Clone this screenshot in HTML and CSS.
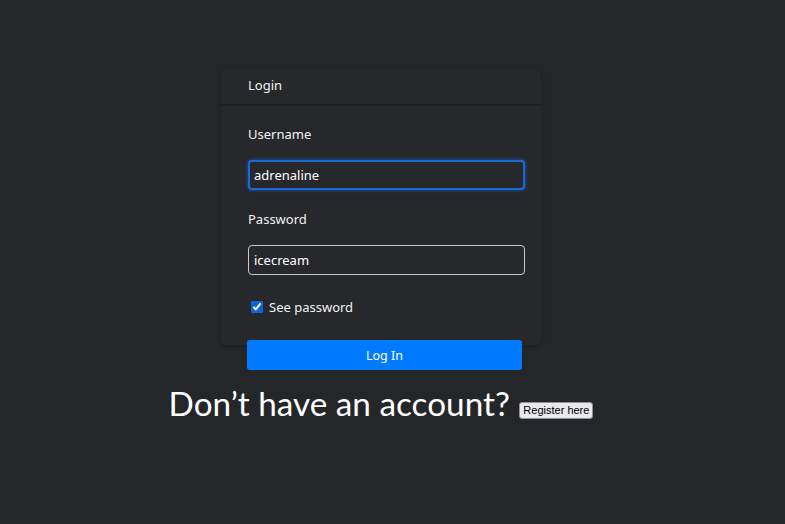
FILE: index.html
```html
<!DOCTYPE html>
<html lang="en">
<head>
<meta charset="utf-8">
<title>Login</title>
<link rel="stylesheet" href="styles.css">
</head>
<body>
<main class="page">
  <form class="login">
    <section class="card">
      <header class="card-header">Login</header>
      <div class="card-body">
        <label class="field-label" for="username">Username</label>
        <input class="field focused" id="username" type="text" value="adrenaline" autofocus>
        <label class="field-label second" for="password">Password</label>
        <input class="field" id="password" type="text" value="icecream">
        <label class="check-row">
          <input type="checkbox" class="check" checked>
          <span>See password</span>
        </label>
      </div>
    </section>
    <button type="button" class="submit">Log In</button>
  </form>
  <p class="register-line">Don’t have an account? <button type="button" class="register">Register here</button></p>
</main>
</body>
</html>
```

FILE: styles.css
```css
html, body {
  margin: 0;
  height: 100%;
}
body {
  background: #25262a;
  font-family: "Noto Sans", "Open Sans", sans-serif;
  color: #f2f2f2;
}
.page {
  display: flex;
  flex-direction: column;
  align-items: center;
  padding-top: 69px;
  padding-right: 23px;
}
.login {
  width: 320px;
  display: flex;
  flex-direction: column;
}
.card {
  background: #27282c;
  border-radius: 6px;
  box-shadow: 0 1px 4px rgba(0, 0, 0, 0.25);
}
.card-header {
  height: 35px;
  line-height: 33px;
  padding-left: 27px;
  font-size: 13px;
  border-bottom: 2px solid #1d1e21;
}
.card-body {
  display: flex;
  flex-direction: column;
  padding: 18px 16px 28px 27px;
}
.field-label {
  font-size: 13px;
  line-height: 20px;
  height: 20px;
}
.field-label.second {
  margin-top: 19px;
}
.field {
  margin-top: 16px;
  height: 30px;
  box-sizing: border-box;
  background: #27282c;
  border: 1px solid #c9c9c9;
  border-radius: 4px;
  color: #ffffff;
  font-family: inherit;
  font-size: 13px;
  padding: 0 5px;
  outline: none;
}
.field.focused {
  border: 2px solid #1a6ad6;
  padding: 0 4px;
  box-shadow: 0 0 3px 1px rgba(13, 110, 253, 0.45);
  caret-color: #ffffff;
}
.check-row {
  margin-top: 22px;
  display: flex;
  align-items: center;
  height: 20px;
  font-size: 13px;
  gap: 6px;
  padding-left: 3px;
}
.check {
  margin: 0;
  width: 12px;
  height: 12px;
  accent-color: #0b63d6;
}
.submit {
  margin: -5px 0 0 26px;
  width: 275px;
  height: 30px;
  border: none;
  border-radius: 3px;
  background: #007bff;
  color: #ffffff;
  font-family: inherit;
  font-size: 12.5px;
  padding: 0;
}
.register-line {
  margin: 10px 0 0;
  font-family: Lato, "Noto Sans", sans-serif;
  font-size: 33.3px;
  line-height: 46px;
  color: #ffffff;
}
.register {
  font-family: "Liberation Sans", Arial, sans-serif;
  font-size: 11px;
  height: 17px;
  padding: 0 3px;
  margin-left: 1px;
  background: #e9e9ed;
  color: #000;
  border: 1px solid #8f8f9d;
  border-radius: 3px;
  vertical-align: 2px;
}
```
